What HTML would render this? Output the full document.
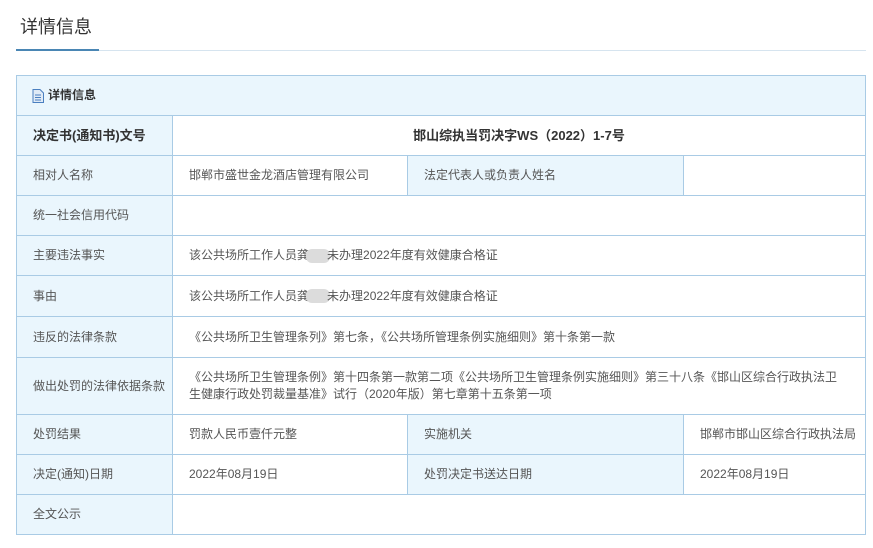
<!DOCTYPE html>
<html><head><meta charset="utf-8">
<style>
*{margin:0;padding:0;box-sizing:border-box}
body{width:873px;height:548px;background:#fff;font-family:"Liberation Sans","Noto Sans CJK SC",sans-serif;font-size:12px;color:#555;position:relative;overflow:hidden}
.t{position:absolute;left:20px;top:13px;font-size:18px;color:#333}
.ul{position:absolute;left:16px;top:49px;width:83px;height:2px;background:#4a86b4}
.ll{position:absolute;left:99px;top:50px;width:767px;height:1px;background:#d6e4ef}
.c{position:absolute;border-right:1px solid #a9cbe5;border-bottom:1px solid #a9cbe5;display:flex;align-items:center;padding-left:16px;line-height:17px}
.l{background:#eaf6fd}
.wrap{position:absolute;left:16px;top:75px;width:850px;height:460px;border:1px solid #a9cbe5;border-right:none;border-bottom:none}
.b{font-weight:bold;color:#333;font-size:13px}
.blur{display:inline-block;width:24px;height:14px;background:#dcdcdc;border-radius:6px;vertical-align:middle;margin:0 -3px}
</style></head><body>
<div class="t">详情信息</div><div class="ul"></div><div class="ll"></div>
<div class="wrap"></div>
<div class="c l" style="left:17px;top:76px;width:849px;height:40px;padding-left:15px;color:#333;font-weight:bold">
<svg width="12" height="14" viewBox="0 0 12 14" style="margin-right:4px"><path d="M1 .5h7l3.5 3.5v9.5H1z" fill="#dfeaf6" stroke="#4a7fc0"/><path d="M3 6h6M3 8.5h6M3 11h6" stroke="#4a7fc0"/></svg>详情信息</div>

<div class="c l b" style="left:17px;top:116px;width:156px;height:40px">决定书(通知书)文号</div>
<div class="c b" style="left:173px;top:116px;width:693px;height:40px;justify-content:center;padding:0">邯山综执当罚决字WS（2022）1-7号</div>

<div class="c l" style="left:17px;top:156px;width:156px;height:40px">相对人名称</div>
<div class="c" style="left:173px;top:156px;width:235px;height:40px">邯郸市盛世金龙酒店管理有限公司</div>
<div class="c l" style="left:408px;top:156px;width:276px;height:40px">法定代表人或负责人姓名</div>
<div class="c" style="left:684px;top:156px;width:182px;height:40px"></div>

<div class="c l" style="left:17px;top:196px;width:156px;height:40px">统一社会信用代码</div>
<div class="c" style="left:173px;top:196px;width:693px;height:40px"></div>

<div class="c l" style="left:17px;top:236px;width:156px;height:40px">主要违法事实</div>
<div class="c" style="left:173px;top:236px;width:693px;height:40px">该公共场所工作人员龚<span class="blur"></span>未办理2022年度有效健康合格证</div>

<div class="c l" style="left:17px;top:276px;width:156px;height:41px">事由</div>
<div class="c" style="left:173px;top:276px;width:693px;height:41px">该公共场所工作人员龚<span class="blur"></span>未办理2022年度有效健康合格证</div>

<div class="c l" style="left:17px;top:317px;width:156px;height:41px">违反的法律条款</div>
<div class="c" style="left:173px;top:317px;width:693px;height:41px">《公共场所卫生管理条列》第七条，《公共场所管理条例实施细则》第十条第一款</div>

<div class="c l" style="left:17px;top:358px;width:156px;height:57px">做出处罚的法律依据条款</div>
<div class="c" style="left:173px;top:358px;width:693px;height:57px;padding-right:18px">《公共场所卫生管理条例》第十四条第一款第二项《公共场所卫生管理条例实施细则》第三十八条《邯山区综合行政执法卫生健康行政处罚裁量基准》试行（2020年版）第七章第十五条第一项</div>

<div class="c l" style="left:17px;top:415px;width:156px;height:40px">处罚结果</div>
<div class="c" style="left:173px;top:415px;width:235px;height:40px">罚款人民币壹仟元整</div>
<div class="c l" style="left:408px;top:415px;width:276px;height:40px">实施机关</div>
<div class="c" style="left:684px;top:415px;width:182px;height:40px">邯郸市邯山区综合行政执法局</div>

<div class="c l" style="left:17px;top:455px;width:156px;height:40px">决定(通知)日期</div>
<div class="c" style="left:173px;top:455px;width:235px;height:40px">2022年08月19日</div>
<div class="c l" style="left:408px;top:455px;width:276px;height:40px">处罚决定书送达日期</div>
<div class="c" style="left:684px;top:455px;width:182px;height:40px">2022年08月19日</div>

<div class="c l" style="left:17px;top:495px;width:156px;height:40px">全文公示</div>
<div class="c" style="left:173px;top:495px;width:693px;height:40px"></div>
</body></html>
